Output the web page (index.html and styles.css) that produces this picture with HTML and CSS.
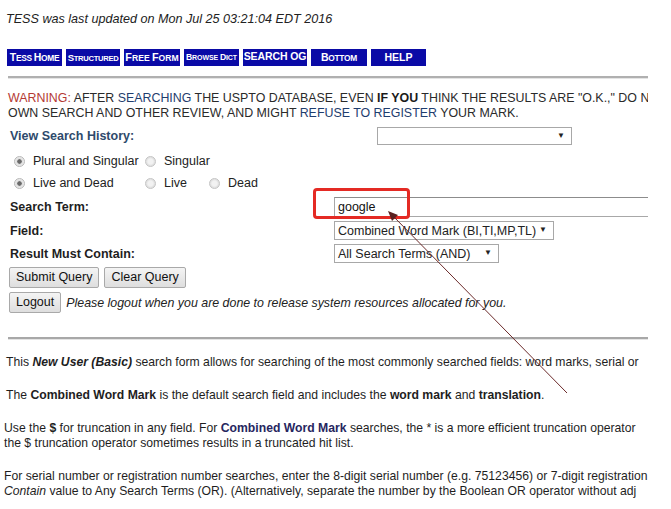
FILE: index.html
```html
<!DOCTYPE html>
<html>
<head>
<meta charset="utf-8">
<link rel="stylesheet" href="styles.css">
</head>
<body>
<div class="page">
  <p class="updated">TESS was last updated on Mon Jul 25 03:21:04 EDT 2016</p>
  <nav class="nav">
    <span class="nb w55"><span class="c">T</span>ESS <span class="c">H</span>OME</span>
    <span class="nb w54 str"><span class="c">S</span>TRUCTURED</span>
    <span class="nb w56 big"><span class="c">F</span>REE <span class="c">F</span>ORM</span>
    <span class="nb w55 tiny"><span class="c">B</span>ROWSE <span class="c">D</span>ICT</span>
    <span class="nb w64 og">SEARCH OG</span>
    <span class="nb w56"><span class="c">B</span>OTTOM</span>
    <span class="nb w55 help">HELP</span>
  </nav>
  <hr class="rule">
  <p class="warning"><span class="red">WARNING:</span> AFTER <span class="blue">SEARCHING</span> THE USPTO DATABASE, EVEN <b>IF YOU</b> THINK THE RESULTS ARE "O.K.," DO N<br>OWN SEARCH AND OTHER REVIEW, AND MIGHT <span class="blue">REFUSE TO REGISTER</span> YOUR MARK.</p>
  <div class="history">
    <span class="hlabel">View Search History:</span>
    <span class="select hsel"><span class="arr">▼</span></span>
  </div>
  <div class="radios">
    <label class="r r1"><span class="radio on"></span>Plural and Singular</label>
    <label class="r"><span class="radio"></span>Singular</label>
  </div>
  <div class="radios">
    <label class="r r1 short"><span class="radio on"></span>Live and Dead</label>
    <label class="r r2"><span class="radio"></span>Live</label>
    <label class="r"><span class="radio"></span>Dead</label>
  </div>
  <div class="form">
    <span class="flabel">Search Term:</span>
    <span class="input">google</span>
    <span class="flabel">Field:</span>
    <span class="select fsel">Combined Word Mark (BI,TI,MP,TL)<span class="arr">▼</span></span>
    <span class="flabel">Result Must Contain:</span>
    <span class="select rsel">All Search Terms (AND)<span class="arr">▼</span></span>
  </div>
  <div class="buttons">
    <span class="btn">Submit Query</span>
    <span class="btn">Clear Query</span>
  </div>
  <div class="buttons">
    <span class="btn">Logout</span>
    <em class="note">Please logout when you are done to release system resources allocated for you.</em>
  </div>
  <hr class="rule rule2">
  <p class="para first">This <b><i>New User (Basic)</i></b> search form allows for searching of the most commonly searched fields: word marks, serial or</p>
  <p class="para">The <b>Combined Word Mark</b> is the default search field and includes the <b>word mark</b> and <b>translation</b>.</p>
  <p class="para indent">Use the <b>$</b> for truncation in any field. For <b class="navy">Combined Word Mark</b> searches, the * is a more efficient truncation operator<br>the $ truncation operator sometimes results in a truncated hit list.</p>
  <p class="para indent">For serial number or registration number searches, enter the 8-digit serial number (e.g. 75123456) or 7-digit registration<br><i>Contain</i> value to Any Search Terms (OR). (Alternatively, separate the number by the Boolean OR operator without adj</p>

  <div class="redbox"></div>
  <svg class="arrow" width="671" height="509" viewBox="0 0 671 509">
    <line x1="567" y1="393" x2="392" y2="215" stroke="#6b2a2a" stroke-width="1"/>
    <polygon points="388,211 398,215 392,221" fill="#5a2020"/>
  </svg>
</div>
</body>
</html>
```

FILE: styles.css
```css
html, body {
  margin: 0;
  padding: 0;
  background: #fff;
}
.page {
  position: relative;
  width: 648px;
  height: 509px;
  overflow: hidden;
  font-family: "Liberation Sans", Arial, sans-serif;
  color: #222;
  font-size: 12.5px;
}
.updated {
  margin: 0;
  padding: 12px 0 0 6px;
  font-style: italic;
  font-size: 12.6px;
  line-height: 15px;
  color: #222;
}
.nav {
  display: flex;
  gap: 4px;
  margin: 22px 0 0 7px;
  height: 17px;
}
.nb {
  background: #0a0aa6;
  color: #fff;
  font-weight: bold;
  font-size: 8.4px;
  height: 17px;
  line-height: 17px;
  text-align: center;
  white-space: nowrap;
  overflow: hidden;
  letter-spacing: -0.3px;
}
.nb .c { font-size: 10.5px; }
.nb.str { font-size: 7.6px; letter-spacing: -0.3px; }
.nb.str .c { font-size: 9.6px; }
.nb.big { font-size: 8.6px; letter-spacing: 0; }
.nb.big .c { font-size: 10.8px; }
.nb.tiny { font-size: 7px; letter-spacing: -0.1px; }
.nb.tiny .c { font-size: 8.6px; }
.nb.og { font-size: 10.5px; line-height: 15px; letter-spacing: -0.1px; }
.nb.help { font-size: 10.5px; letter-spacing: 0; }
.w54 { width: 54px; }
.w55 { width: 55px; }
.w56 { width: 56px; }
.w64 { width: 64px; }
.rule {
  border: 0;
  height: 2px;
  background: #b0b0b0;
  border-bottom: 1px solid #e4e4e4;
  margin: 10px 0 0 8px;
  width: 660px;
}
.warning {
  margin: 12px 0 0 8px;
  font-size: 12.4px;
  line-height: 15px;
  white-space: nowrap;
  color: #2a2a2a;
}
.warning b { color: #1a1a1a; }
.red { color: #b43a34; }
.blue { color: #1f3d6e; }
.history {
  display: flex;
  align-items: center;
  height: 18px;
  margin: 6px 0 0 10px;
}
.hlabel {
  font-weight: bold;
  color: #2e4a6c;
  width: 367px;
}
.select {
  position: relative;
  display: inline-flex;
  align-items: center;
  box-sizing: border-box;
  height: 18px;
  border: 1px solid #a8a8a8;
  background: #fff;
  padding-left: 3px;
  font-size: 12.5px;
  color: #222;
  white-space: nowrap;
}
.arr {
  position: absolute;
  right: 6px;
  top: 3px;
  font-size: 8px;
  color: #222;
}
.hsel { width: 195px; }
.radios {
  display: flex;
  align-items: center;
  height: 18px;
  margin: 0 0 0 13px;
}
.history + .radios { margin-top: 7px; }
.radios + .radios { margin-top: 4px; }
.r {
  display: flex;
  align-items: center;
  font-size: 12.5px;
  color: #222;
}
.r1 { width: 131px; }
.r2 { width: 64px; }
.radio {
  display: inline-block;
  box-sizing: border-box;
  width: 11px;
  height: 11px;
  border-radius: 50%;
  border: 1px solid #c4c4c4;
  background: radial-gradient(circle, #f2f2f2 0 40%, #e2e2e2 60%);
  margin: 0 8px 0 1px;
}
.radio.on {
  background: radial-gradient(circle, #6a6a6a 0 30%, #dcdcdc 40%, #ececec 70%);
  border-color: #b8b8b8;
}
.form {
  display: grid;
  grid-template-columns: 324px 1fr;
  row-gap: 4px;
  align-items: center;
  margin: 5px 0 0 10px;
}
.flabel {
  font-weight: bold;
  color: #1e1e1e;
  font-size: 12.5px;
}
.input {
  box-sizing: border-box;
  height: 20px;
  border: 1px solid #a8a8a8;
  border-top-color: #8c8c8c;
  padding: 2px 0 0 3px;
  width: 400px;
  font-size: 12.5px;
  line-height: 15px;
  color: #111;
}
.form .select { height: 19px; }
.fsel { width: 220px; }
.rsel { width: 165px; }
.buttons {
  display: flex;
  align-items: center;
  gap: 5px;
  margin: 4px 0 0 9px;
}
.btn {
  box-sizing: border-box;
  height: 21px;
  line-height: 19px;
  padding: 0 6px;
  border: 1px solid #a9a9a9;
  border-radius: 2px;
  background: linear-gradient(#f4f4f4, #dedede);
  font-size: 12.5px;
  color: #111;
}
.note {
  font-size: 12.4px;
  color: #222;
}
.rule2 {
  margin-top: 24px;
  width: 642px;
  background: #a8a8a8;
}
.para {
  margin: 18px 0 0 6px;
  font-size: 12.2px;
  line-height: 15px;
  white-space: nowrap;
  color: #1e1e1e;
}
.para.first { margin-top: 15px; }
.indent { margin-left: 4px; }
.navy { color: #262660; }
.redbox {
  position: absolute;
  left: 313px;
  top: 188px;
  width: 97px;
  height: 31px;
  box-sizing: border-box;
  border: 3px solid #e42a24;
  border-radius: 4px;
}
.arrow {
  position: absolute;
  left: 0;
  top: 0;
  pointer-events: none;
}
```
